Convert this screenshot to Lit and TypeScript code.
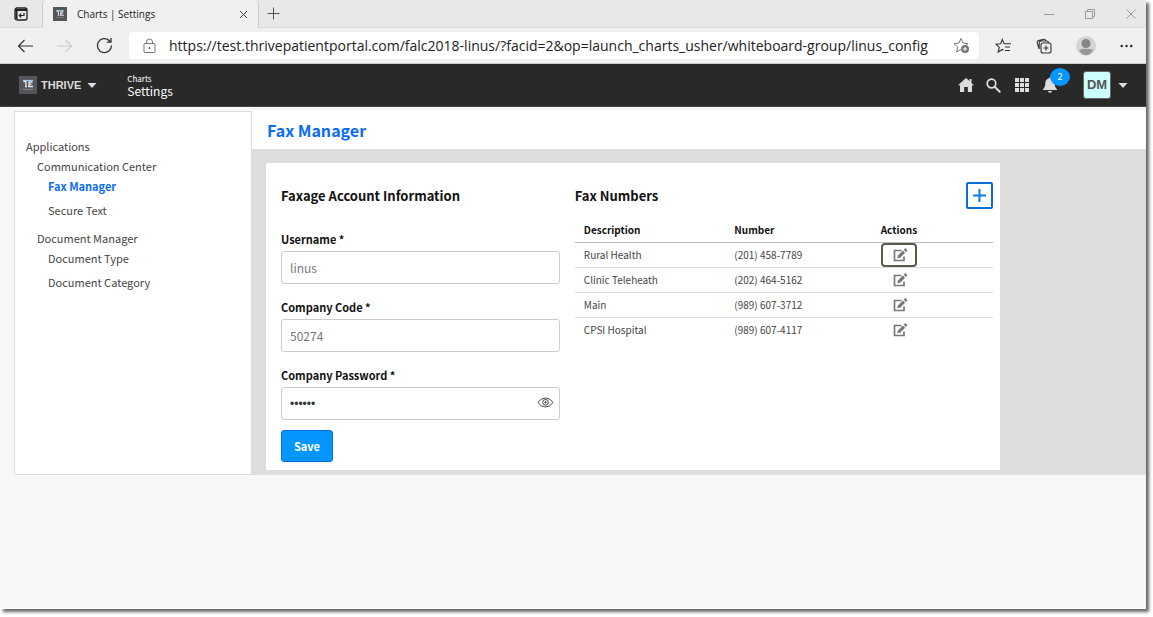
import { LitElement, html, css, svg } from "lit";
import { customElement, property, state } from "lit/decorators.js";
import { classMap } from "lit/directives/class-map.js";

const base = css`
  :host,
  * {
    box-sizing: border-box;
  }
  button {
    border: 0;
    margin: 0;
    padding: 0;
    background: none;
    color: inherit;
    font: inherit;
    cursor: pointer;
  }
  svg {
    display: block;
    flex: none;
  }
  h1,
  h2,
  p,
  ul {
    margin: 0;
    padding: 0;
  }
  ul {
    list-style: none;
  }
  a {
    color: inherit;
    text-decoration: none;
  }
`;

const logo = (size: number) => html`
  <svg width=${size} height=${size} viewBox="0 0 18 18" aria-hidden="true">
    <rect width="18" height="18" fill="#55565a" />
    <path d="M4 4.500h10" stroke="#8fd0ea" stroke-width="1.200" />
    <path d="M4.500 5.500h3M7 5.500v5M10 5.500v5M10 6h3.500M10 8.200h2.500M9 10.500h5M6 10.500h2" stroke="#e4e8ea" stroke-width="1.300" fill="none" />
    <path d="M4 13.500h10" stroke="#8a8b8f" stroke-width="0.800" />
  </svg>
`;

@customElement("browser-bar")
class BrowserBar extends LitElement {
  @property() address = "";

  static styles = [
    base,
    css`
      :host {
        display: block;
        background: #f0f0f0;
        color: #222;
        font-family: "Open Sans", "Noto Sans", sans-serif;
      }
      .tabs {
        display: flex;
        height: 28px;
        background: #e8e8e8;
        border-bottom: 1px solid #dcdcdc;
      }
      .tab-menu {
        width: 42px;
        display: grid;
        place-items: center;
      }
      .tab {
        display: flex;
        align-items: center;
        width: 217px;
        height: 28px;
        padding: 0 10px;
        gap: 10px;
        background: #f0f0f0;
        border-left: 1px solid #ccc;
        border-right: 1px solid #ccc;
        border-radius: 4px 4px 0 0;
        font-size: 10px;
        line-height: 16px;
        white-space: nowrap;
      }
      .tab-title {
        flex: 1;
      }
      .new-tab {
        padding: 0 8px;
      }
      .window-controls {
        display: flex;
        align-items: center;
        gap: 31px;
        margin-left: auto;
        padding-right: 10px;
      }
      .toolbar {
        display: flex;
        align-items: center;
        height: 36px;
        padding: 0 13px 0 16px;
        border-bottom: 1px solid #ccc;
      }
      .moves {
        display: flex;
        align-items: center;
        width: 113px;
        gap: 22px;
      }
      .address {
        flex: 1;
        min-width: 0;
        display: flex;
        align-items: center;
        height: 27px;
        padding: 0 9px 0 14px;
        background: #fff;
        border-radius: 4px;
      }
      .url {
        flex: 1;
        min-width: 0;
        margin: 0 0 0 13px;
        padding: 1px 0 0;
        border: 0;
        outline: 0;
        background: none;
        color: #222;
        font: 14px/20px "Open Sans", "Noto Sans", sans-serif;
      }
      .tools {
        display: flex;
        align-items: center;
        gap: 24px;
        padding-left: 16px;
      }
    `,
  ];

  render() {
    return html`
      <div class="tabs">
        <button class="tab-menu" aria-label="Tab actions">
          <svg width="14" height="14" viewBox="0 0 14 14" fill="none" stroke="#222">
            <rect x="1" y="1" width="12" height="12" rx="2" stroke-width="1.300" />
            <path d="M1 3h12M2.500 2v10" stroke-width="2" />
            <path d="M10 6v2.500H5.500M7.200 6.600L5.300 8.500l1.900 1.900" stroke-width="1.200" />
          </svg>
        </button>
        <div class="tab">
          ${logo(14)}
          <span class="tab-title">Charts | Settings</span>
          <button aria-label="Close tab">
            <svg width="9" height="9" viewBox="0 0 9 9" stroke="#444"><path d="M1 1l7 7M8 1L1 8" /></svg>
          </button>
        </div>
        <button class="new-tab" aria-label="New tab">
          <svg width="13" height="13" viewBox="0 0 13 13" stroke="#555"><path d="M6.500 0.500v12M0.500 6.500h12" /></svg>
        </button>
        <div class="window-controls">
          <button aria-label="Minimize">
            <svg width="10" height="10" viewBox="0 0 10 10" stroke="#999"><path d="M0 5.500h10" /></svg>
          </button>
          <button aria-label="Restore">
            <svg width="10" height="10" viewBox="0 0 10 10" fill="none" stroke="#999">
              <path d="M0.500 2.500h7v7h-7zM2.500 2.500v-2h7v7h-2" />
            </svg>
          </button>
          <button aria-label="Close window">
            <svg width="10" height="10" viewBox="0 0 10 10" stroke="#999"><path d="M0.500 0.500l9 9M9.500 0.500l-9 9" /></svg>
          </button>
        </div>
      </div>
      <div class="toolbar">
        <div class="moves">
          <button aria-label="Back">
            <svg width="18" height="16" viewBox="0 0 18 16" fill="none" stroke="#333" stroke-width="1.200">
              <path d="M17 8H2.500M8.500 2l-6 6 6 6" />
            </svg>
          </button>
          <button aria-label="Forward">
            <svg width="18" height="16" viewBox="0 0 18 16" fill="none" stroke="#ccc" stroke-width="1.200">
              <path d="M1 8h14.500M9.500 2l6 6-6 6" />
            </svg>
          </button>
          <button aria-label="Refresh">
            <svg width="17" height="17" viewBox="0 0 17 17" fill="none" stroke="#333" stroke-width="1.300">
              <path d="M15.500 8.500A7 7 0 1 1 13.200 3.400L14.800 5M15 1v4.200h-4.200" />
            </svg>
          </button>
        </div>
        <div class="address">
          <svg width="13" height="16" viewBox="0 0 13 16" fill="none" stroke="#777">
            <rect x="1" y="5.500" width="11" height="9" rx="1" />
            <path d="M3.500 5.500V4a3 3 0 0 1 6 0v1.500" />
            <circle cx="6.500" cy="10" r="0.900" fill="#555" stroke="none" />
          </svg>
          <input class="url" aria-label="Address" .value=${this.address} />
          <button aria-label="Add to favorites">
            <svg width="17" height="17" viewBox="0 0 17 17" fill="none" stroke="#777">
              <path d="M8 12.500l-4.300 2.400 1-4.900L1 6.600l5-.6L8 1.500 10 6l5 .6-2 1.900" />
              <circle cx="12" cy="12" r="4" fill="#777" stroke="none" />
              <path d="M12 10v4M10 12h4" stroke="#fff" />
            </svg>
          </button>
        </div>
        <div class="tools">
          <button aria-label="Favorites">
            <svg width="17" height="16" viewBox="0 0 17 16" fill="none" stroke="#333" stroke-width="1.100">
              <path d="M8.500 12.300l-1.200-.8-4.200 2.500 1.200-4.700L1 6.100l4.600-.4L7.300 1.500l1.800 4.200H16M10 9h5M10 12.500h5" />
            </svg>
          </button>
          <button aria-label="Collections">
            <svg width="16" height="16" viewBox="0 0 16 16" fill="none" stroke="#333" stroke-width="1.100">
              <rect x="5" y="5" width="10" height="10" rx="2" />
              <path d="M10 7.500v5M7.500 10h5" />
              <path d="M3.200 11L1.200 4.800Q.900 3.200 2.400 2.600l5.400-1.400Q9.300 1 9.900 2.800M3.200 11V5q0-2 2-2h5.500q1.500 0 2 2" />
            </svg>
          </button>
          <button aria-label="Profile">
            <svg width="20" height="20" viewBox="0 0 20 20">
              <circle cx="10" cy="10" r="10" fill="#d4d4d4" />
              <circle cx="10" cy="7.500" r="4.500" fill="#858585" />
              <path d="M3 14q7-2.500 14 0-2.500 5-7 5t-7-5z" fill="#959595" />
            </svg>
          </button>
          <button aria-label="Settings and more">
            <svg width="13" height="4" viewBox="0 0 13 4" fill="#222">
              <circle cx="1.700" cy="2" r="1.200" /><circle cx="6.500" cy="2" r="1.200" /><circle cx="11.300" cy="2" r="1.200" />
            </svg>
          </button>
        </div>
      </div>
    `;
  }
}

@customElement("app-header")
class AppHeader extends LitElement {
  static styles = [
    base,
    css`
      :host {
        display: flex;
        align-items: center;
        height: 43px;
        padding: 0 18px 0 19px;
        background: #292929;
        border-bottom: 1px solid #444;
        color: #ddd;
        font-family: "Noto Sans CJK SC", "Open Sans", sans-serif;
      }
      .brand {
        display: flex;
        align-items: center;
        gap: 4px;
        font: bold 11px/16px "Liberation Sans", sans-serif;
      }
      .brand .caret {
        margin-left: 2px;
      }
      .crumbs {
        margin-left: 30px;
        color: #fff;
      }
      .parent {
        font-size: 8px;
        line-height: 10px;
      }
      .current {
        font-size: 12px;
        line-height: 13px;
      }
      .actions {
        display: flex;
        align-items: center;
        gap: 12px;
        margin-left: auto;
      }
      .bell {
        position: relative;
        margin-right: 14px;
      }
      .count {
        position: absolute;
        left: 7px;
        top: -9px;
        width: 20px;
        height: 18px;
        border-radius: 50%;
        background: #0696ff;
        color: #fff;
        font-size: 9px;
        line-height: 18px;
        text-align: center;
      }
      .user {
        display: flex;
        align-items: center;
        gap: 7px;
      }
      .initials {
        width: 28px;
        height: 28px;
        border: 1px solid #666;
        border-radius: 3px;
        background: #cff;
        color: #555;
        font: bold 13px/26px "Liberation Sans", sans-serif;
        text-align: center;
      }
    `,
  ];

  private caret() {
    return html`<svg class="caret" width="10" height="5" viewBox="0 0 10 5" fill="#ddd"><path d="M0.500 0h9L5 5z" /></svg>`;
  }

  render() {
    return html`
      <button class="brand">${logo(18)}<span>THRIVE</span>${this.caret()}</button>
      <div class="crumbs">
        <p class="parent">Charts</p>
        <p class="current">Settings</p>
      </div>
      <div class="actions">
        <button aria-label="Home">
          <svg width="16" height="14" viewBox="0 0 16 14" fill="#ddd">
            <path d="M8 0L0 7.200h2V14h4.200V9h3.600v5H14V7.200h2l-2.500-2.300V1h-2v2.100z" />
          </svg>
        </button>
        <button aria-label="Search">
          <svg width="15" height="15" viewBox="0 0 15 15" fill="none" stroke="#ddd">
            <circle cx="5.500" cy="5.500" r="4.300" stroke-width="1.700" />
            <path d="M8.700 8.700l5 5" stroke-width="2" stroke-linecap="round" />
          </svg>
        </button>
        <button aria-label="Applications">
          <svg width="18" height="14" viewBox="0 0 18 14" fill="#ddd">
            ${[0, 5, 10].map((y) => [2, 7, 12].map((x) => svg`<rect x=${x} y=${y} width="4" height="4" />`))}
          </svg>
        </button>
        <button class="bell" aria-label="Notifications">
          <svg width="14" height="16" viewBox="0 0 14 16" fill="#ddd">
            <path d="M6 1.200a1 1 0 0 1 2 0c2.500.600 3.700 2.400 3.700 5 0 3 .700 4.500 2.300 6V13H0v-.8c1.600-1.500 2.300-3 2.300-6 0-2.600 1.200-4.400 3.700-5zM5 14h4a2 1.800 0 0 1-4 0z" />
          </svg>
          <span class="count">2</span>
        </button>
        <button class="user" aria-label="DM, account menu"><span class="initials">DM</span>${this.caret()}</button>
      </div>
    `;
  }
}

const MENU = [
  { title: "Communication Center", items: ["Fax Manager", "Secure Text"] },
  { title: "Document Manager", items: ["Document Type", "Document Category"] },
];

@customElement("settings-menu")
class SettingsMenu extends LitElement {
  @property() selected = "";

  static styles = [
    base,
    css`
      :host {
        display: block;
        padding: 24px 11px;
        background: #fff;
        border: 1px solid #ddd;
        color: #444;
        font: 11px/20px "Noto Sans CJK SC", "Open Sans", sans-serif;
      }
      .groups {
        display: grid;
        gap: 8px;
        padding-left: 11px;
      }
      .items {
        display: grid;
        gap: 4px;
        padding-left: 11px;
      }
      .active {
        color: #0a6cf5;
        font-weight: 700;
      }
    `,
  ];

  render() {
    return html`
      <nav aria-label="Applications">
        <p>Applications</p>
        <ul class="groups">
          ${MENU.map(
            (group) => html`
              <li>
                <p>${group.title}</p>
                <ul class="items">
                  ${group.items.map(
                    (item) => html`<li><a href="#" class=${classMap({ active: item === this.selected })}>${item}</a></li>`
                  )}
                </ul>
              </li>
            `
          )}
        </ul>
      </nav>
    `;
  }
}

const NUMBERS = [
  ["Rural Health", "(201) 458-7789"],
  ["Clinic Teleheath", "(202) 464-5162"],
  ["Main", "(989) 607-3712"],
  ["CPSI Hospital", "(989) 607-4117"],
];

@customElement("fax-manager")
class FaxManager extends LitElement {
  @state() private showPassword = false;

  static styles = [
    base,
    css`
      :host {
        display: block;
        background: #ddd;
        color: #111;
        font-family: "Noto Sans CJK SC", "Open Sans", sans-serif;
      }
      .title {
        padding: 9px 15px;
        background: #fff;
        color: #0a6cf5;
        font-size: 16px;
        font-weight: 700;
        line-height: 20px;
      }
      .card {
        display: grid;
        grid-template-columns: 2fr 3fr;
        gap: 15px;
        max-width: 734px;
        margin: 14px 14px 5px;
        padding: 19px 7px 8px 15px;
        background: #fff;
      }
      .head {
        display: flex;
        align-items: center;
        justify-content: space-between;
        height: 27px;
      }
      h2 {
        font-size: 13px;
        line-height: 20px;
      }
      .fields {
        display: grid;
        gap: 13px;
        margin-top: 20px;
      }
      label {
        display: block;
        margin-bottom: 2px;
        font-size: 11px;
        font-weight: 700;
        line-height: 20px;
      }
      .box {
        position: relative;
      }
      input {
        display: block;
        width: 100%;
        height: 33px;
        padding: 0 8px;
        border: 1px solid #ccc;
        border-radius: 3px;
        outline: 0;
        background: #fff;
        color: #777;
        font: 12px/20px "Noto Sans CJK SC", "Open Sans", sans-serif;
      }
      .password {
        color: #333;
        font-family: "Liberation Sans", sans-serif;
      }
      .eye {
        position: absolute;
        right: 6px;
        top: 10px;
      }
      .save {
        display: block;
        width: 52px;
        height: 32px;
        margin-top: 10px;
        border: 1px solid #0a6cd6;
        border-radius: 3px;
        background: #0696ff;
        color: #fff;
        font-size: 11px;
        font-weight: 700;
        line-height: 20px;
      }
      .add {
        display: grid;
        place-items: center;
        width: 27px;
        height: 27px;
        border: 2px solid #0a6cd6;
        border-radius: 2px;
      }
      table {
        width: 100%;
        margin-top: 9px;
        border-collapse: collapse;
        table-layout: fixed;
        text-align: left;
      }
      th,
      td {
        padding: 0 9px;
        font-size: 10px;
        line-height: 16px;
      }
      th {
        height: 24px;
        border-bottom: 1px solid #bbb;
      }
      td {
        height: 25px;
        color: #444;
      }
      tr + tr td {
        border-top: 1px solid #ddd;
      }
      .description {
        width: 36%;
      }
      .number {
        width: 35%;
      }
      .edit {
        display: grid;
        place-items: center;
        width: 36px;
        height: 24px;
        padding-left: 3px;
        border: 2px solid transparent;
        border-radius: 4px;
      }
      .edit.focused {
        border-color: #5c5a4a;
      }
    `,
  ];

  render() {
    return html`
      <h1 class="title">Fax Manager</h1>
      <div class="card">
        <section>
          <div class="head"><h2>Faxage Account Information</h2></div>
          <form @submit=${(e: Event) => e.preventDefault()}>
            <div class="fields">
              <div>
                <label for="username">Username *</label>
                <input id="username" value="linus" />
              </div>
              <div>
                <label for="code">Company Code *</label>
                <input id="code" value="50274" />
              </div>
              <div>
                <label for="password">Company Password *</label>
                <div class="box">
                  <input
                    id="password"
                    class="password"
                    type=${this.showPassword ? "text" : "password"}
                    value="secret"
                  />
                  <button
                    class="eye"
                    type="button"
                    aria-label="Show password"
                    @click=${() => (this.showPassword = !this.showPassword)}
                  >
                    <svg width="17" height="11" viewBox="0 0 17 11" fill="none" stroke="#444">
                      <path d="M0.800 5.500Q4 1 8.500 1t7.700 4.500Q13 10 8.500 10T0.800 5.500z" />
                      <circle cx="8.500" cy="5.300" r="2.800" />
                      <circle cx="8.500" cy="5.300" r="0.700" fill="#444" />
                    </svg>
                  </button>
                </div>
              </div>
            </div>
            <button class="save">Save</button>
          </form>
        </section>
        <section>
          <div class="head">
            <h2>Fax Numbers</h2>
            <button class="add" aria-label="Add fax number">
              <svg width="13" height="13" viewBox="0 0 13 13" stroke="#0a7be8" stroke-width="2">
                <path d="M6.500 0v13M0 6.500h13" />
              </svg>
            </button>
          </div>
          <table>
            <thead>
              <tr>
                <th class="description">Description</th>
                <th class="number">Number</th>
                <th>Actions</th>
              </tr>
            </thead>
            <tbody>
              ${NUMBERS.map(
                ([name, number], i) => html`
                  <tr>
                    <td>${name}</td>
                    <td>${number}</td>
                    <td>
                      <button class=${classMap({ edit: true, focused: i === 0 })} aria-label="Edit ${name}">
                        <svg width="15" height="14" viewBox="0 0 15 14" fill="none" stroke="#777">
                          <path d="M8.500 2.500H1.500v10h9.500V8.500" stroke-width="1.700" />
                          <path d="M5.800 8.800L11 3.600" stroke-width="3.200" />
                          <path d="M11.800 2.800L13.400 1.200" stroke-width="3.200" />
                          <path d="M4.300 10.300l.500-2.700 2.200 2.200z" fill="#777" stroke="none" />
                        </svg>
                      </button>
                    </td>
                  </tr>
                `
              )}
            </tbody>
          </table>
        </section>
      </div>
    `;
  }
}

@customElement("app-root")
class AppRoot extends LitElement {
  static styles = css`
    :host {
      box-sizing: border-box;
      display: flex;
      min-height: 100vh;
      padding: 0 7px 8px 0;
      background: #fff;
    }
    .window {
      flex: 1;
      min-width: 0;
      background: #f7f7f7;
      border-bottom: 1px solid #fff;
      box-shadow: 3px 3px 3px #666;
    }
    .body {
      display: grid;
      grid-template-columns: 238px 1fr;
      padding: 4px 0 0 14px;
    }
  `;

  render() {
    return html`
      <div class="window">
        <browser-bar
          address="https://test.thrivepatientportal.com/falc2018-linus/?facid=2&op=launch_charts_usher/whiteboard-group/linus_config"
        ></browser-bar>
        <app-header></app-header>
        <div class="body">
          <settings-menu selected="Fax Manager"></settings-menu>
          <fax-manager></fax-manager>
        </div>
      </div>
    `;
  }
}
